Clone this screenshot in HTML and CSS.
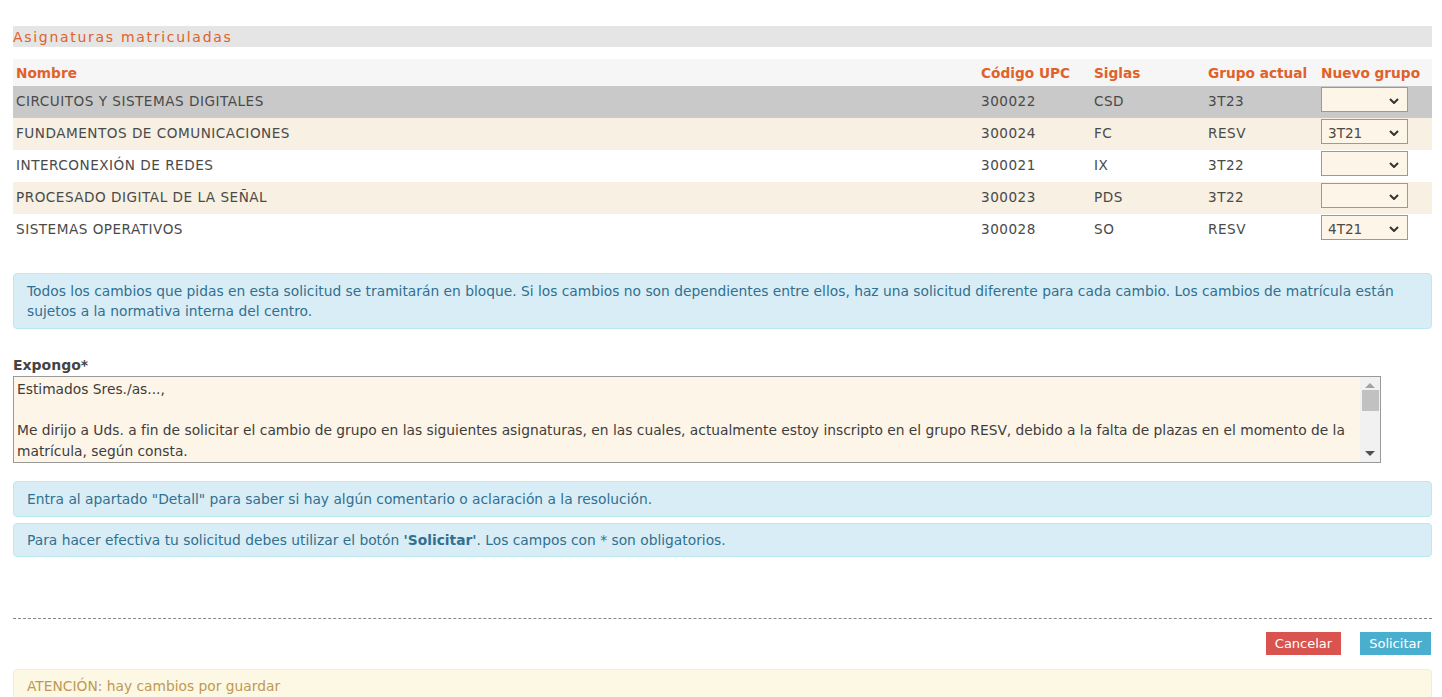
FILE: index.html
```html
<!DOCTYPE html>
<html lang="es">
<head>
<meta charset="utf-8">
<title>Cambio de grupo</title>
<link rel="stylesheet" href="styles.css">
</head>
<body>
<div class="page">
  <h2 class="section-title">Asignaturas matriculadas</h2>
  <table class="subjects">
    <thead>
      <tr>
        <th class="c-name">Nombre</th>
        <th class="c-code">Código UPC</th>
        <th class="c-sig">Siglas</th>
        <th class="c-grp">Grupo actual</th>
        <th class="c-new">Nuevo grupo</th>
      </tr>
    </thead>
    <tbody>
      <tr class="hover">
        <td>CIRCUITOS Y SISTEMAS DIGITALES</td><td>300022</td><td>CSD</td><td>3T23</td>
        <td class="sel-cell"><div class="sel"><span></span><svg viewBox="0 0 10 6"><path d="M1 1l4 4 4-4"/></svg></div></td>
      </tr>
      <tr class="alt">
        <td>FUNDAMENTOS DE COMUNICACIONES</td><td>300024</td><td>FC</td><td>RESV</td>
        <td class="sel-cell"><div class="sel"><span>3T21</span><svg viewBox="0 0 10 6"><path d="M1 1l4 4 4-4"/></svg></div></td>
      </tr>
      <tr>
        <td>INTERCONEXIÓN DE REDES</td><td>300021</td><td>IX</td><td>3T22</td>
        <td class="sel-cell"><div class="sel"><span></span><svg viewBox="0 0 10 6"><path d="M1 1l4 4 4-4"/></svg></div></td>
      </tr>
      <tr class="alt">
        <td>PROCESADO DIGITAL DE LA SEÑAL</td><td>300023</td><td>PDS</td><td>3T22</td>
        <td class="sel-cell"><div class="sel"><span></span><svg viewBox="0 0 10 6"><path d="M1 1l4 4 4-4"/></svg></div></td>
      </tr>
      <tr>
        <td>SISTEMAS OPERATIVOS</td><td>300028</td><td>SO</td><td>RESV</td>
        <td class="sel-cell"><div class="sel"><span>4T21</span><svg viewBox="0 0 10 6"><path d="M1 1l4 4 4-4"/></svg></div></td>
      </tr>
    </tbody>
  </table>

  <div class="alert info first">Todos los cambios que pidas en esta solicitud se tramitarán en bloque. Si los cambios no son dependientes entre ellos, haz una solicitud diferente para cada cambio. Los cambios de matrícula están sujetos a la normativa interna del centro.</div>

  <label class="field-label">Expongo*</label>
  <div class="textarea">
    <div class="ta-text">
      <p>Estimados Sres./as...,</p>
      <p>&nbsp;</p>
      <p>Me dirijo a Uds. a fin de solicitar el cambio de grupo en las siguientes asignaturas, en las cuales, actualmente estoy inscripto en el grupo RESV, debido a la falta de plazas en el momento de la matrícula, según consta.</p>
    </div>
    <div class="scrollbar">
      <span class="arrow up"></span>
      <span class="thumb"></span>
      <span class="arrow down"></span>
    </div>
  </div>

  <div class="alert info">Entra al apartado "Detall" para saber si hay algún comentario o aclaración a la resolución.</div>
  <div class="alert info second">Para hacer efectiva tu solicitud debes utilizar el botón <b>'Solicitar'</b>. Los campos con * son obligatorios.</div>

  <hr class="dashed">

  <div class="actions">
    <button class="btn cancel">Cancelar</button>
    <button class="btn submit">Solicitar</button>
  </div>

  <div class="alert warning">ATENCIÓN: hay cambios por guardar</div>
</div>
</body>
</html>
```

FILE: styles.css
```css
html, body {
  margin: 0;
  padding: 0;
  background: #fff;
}
body {
  font-family: "DejaVu Sans", Verdana, sans-serif;
  color: #444;
  overflow: hidden;
}
.page {
  padding: 26px 10px 0 13px;
}
.section-title {
  margin: 0;
  height: 21px;
  line-height: 22px;
  background: #e5e5e5;
  color: #e0622a;
  font-weight: normal;
  font-size: 14px;
  letter-spacing: 1.7px;
}
.subjects {
  width: 100%;
  border-collapse: collapse;
  margin-top: 12px;
  font-size: 13.6px;
}
.subjects th {
  background: #f6f6f6;
  color: #e0622a;
  font-weight: bold;
  text-align: left;
  height: 27px;
  padding: 0 3px;
  font-size: 13.7px;
  vertical-align: middle;
  white-space: nowrap;
}
.subjects td {
  height: 32px;
  padding: 0 3px 3px 3px;
  box-sizing: border-box;
  color: #4a4a4a;
  vertical-align: middle;
  white-space: nowrap;
  letter-spacing: 0.5px;
}
.subjects td.sel-cell {
  vertical-align: top;
  padding-top: 1px;
  padding-bottom: 0;
  letter-spacing: 0;
}
.subjects tr.hover td { background: #c9c9c9; }
.subjects tr.alt td { background: #f7f0e3; }
.c-code { width: 107px; }
.c-sig { width: 108px; }
.c-grp { width: 107px; }
.c-new { width: 108px; }
.sel {
  box-sizing: border-box;
  width: 87px;
  height: 25px;
  border: 1px solid #9a9a9a;
  background: #fdf6e8;
  display: flex;
  align-items: center;
  justify-content: space-between;
  padding: 2px 8px 0 6px;
  font-size: 13.6px;
  color: #4a4a4a;
}
.sel svg {
  width: 10px;
  height: 6px;
  fill: none;
  stroke: #333;
  stroke-width: 2;
}
.alert {
  box-sizing: border-box;
  border-radius: 4px;
  font-family: "DejaVu Sans", sans-serif;
  font-size: 13.8px;
  line-height: 20px;
}
.alert.info {
  background: #d9edf7;
  border: 1px solid #bce8f1;
  color: #31708f;
  padding: 7px 13px;
  margin-top: 6px;
}
.alert.info.first {
  margin-top: 27px;
}
.alert.info.second {
  padding: 6px 13px;
}
.alert.info b { font-weight: bold; }
.field-label {
  display: block;
  margin-top: 27px;
  font-family: "DejaVu Sans", sans-serif;
  font-weight: bold;
  font-size: 14px;
  color: #444;
  line-height: 18px;
}
.textarea {
  box-sizing: border-box;
  width: 1368px;
  height: 87px;
  border: 1px solid #999;
  background: #fdf5e7;
  display: flex;
  margin-top: 2px;
  margin-bottom: 18px;
  overflow: hidden;
}
.ta-text {
  flex: 1;
  padding: 2px 14px 1px 3px;
  font-family: "DejaVu Sans", sans-serif;
  font-size: 13.8px;
  line-height: 20.5px;
  color: #3d3d3d;
}
.ta-text p { margin: 0; }
.scrollbar {
  width: 20px;
  background: #f1f1f1;
  display: flex;
  flex-direction: column;
  align-items: center;
}
.thumb {
  display: block;
  width: 17px;
  height: 21px;
  background: #c1c1c1;
  margin-top: 2px;
}
.arrow {
  display: block;
  width: 0;
  height: 0;
  border-left: 5px solid transparent;
  border-right: 5px solid transparent;
}
.arrow.up {
  border-bottom: 5px solid #a3a3a3;
  margin-top: 6px;
}
.arrow.down {
  border-top: 5px solid #505050;
  margin-top: auto;
  margin-bottom: 6px;
}
.dashed {
  border: 0;
  border-top: 1px dashed #888;
  margin: 61px 0 0 0;
  height: 0;
}
.actions {
  display: flex;
  justify-content: flex-end;
  gap: 19px;
  margin-top: 13px;
  padding-right: 1px;
}
.btn {
  border: 0;
  border-radius: 0;
  color: #fff;
  font-family: "DejaVu Sans", sans-serif;
  font-size: 13px;
  height: 23px;
  padding: 0;
  cursor: pointer;
}
.btn.cancel { background: #d9534f; width: 75px; }
.btn.submit { background: #4aafcf; width: 71px; }
.alert.warning {
  margin-top: 14px;
  background: #fcf8e3;
  border: 1px solid #f8ecc9;
  color: #c09853;
  padding: 6px 13px;
  height: 40px;
}
```
